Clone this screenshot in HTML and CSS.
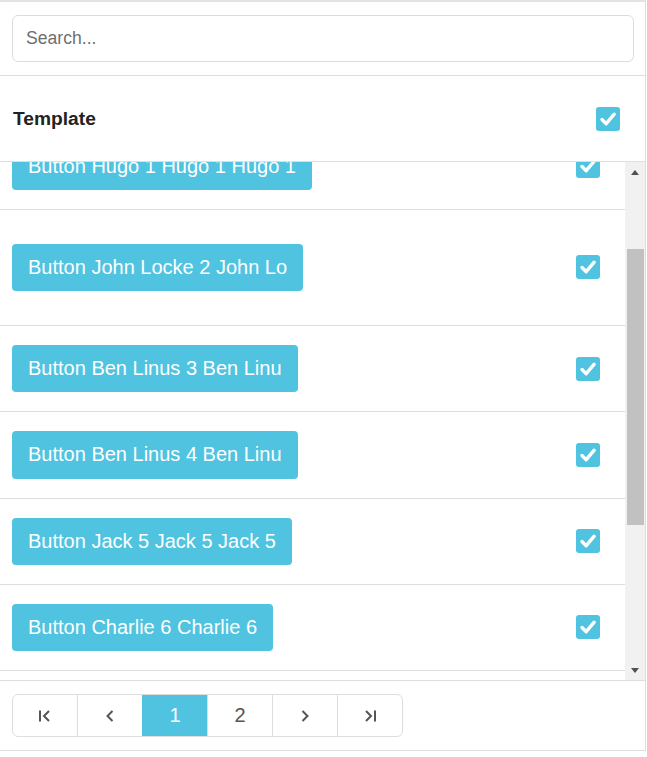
FILE: index.html
```html
<!DOCTYPE html>
<html lang="en">
<head>
<meta charset="utf-8">
<title>Template list</title>
<link rel="stylesheet" href="styles.css">
</head>
<body>
<div class="panel">
  <div class="search-bar">
    <input class="search-input" type="text" placeholder="Search...">
  </div>
  <div class="header-row">
    <span class="header-title">Template</span>
    <span class="check-cell">
      <svg class="checkbox" viewBox="0 0 24 24" width="24" height="24"><rect width="24" height="24" rx="3" fill="#4fc3df"/><path d="M6 12.5 L10.2 16.7 L18.2 7.2" fill="none" stroke="#fff" stroke-width="3.4" stroke-linecap="round" stroke-linejoin="round"/></svg>
    </span>
  </div>
  <div class="scroll-area">
    <div class="viewport">
      <div class="rows">
        <div class="row"><span class="btn">Button Hugo 1 Hugo 1 Hugo 1</span><span class="check-cell"><svg class="checkbox" viewBox="0 0 24 24" width="24" height="24"><rect width="24" height="24" rx="3" fill="#4fc3df"/><path d="M6 12.5 L10.2 16.7 L18.2 7.2" fill="none" stroke="#fff" stroke-width="3.4" stroke-linecap="round" stroke-linejoin="round"/></svg></span></div>
        <div class="row row-tall"><span class="btn">Button John Locke 2 John Lo</span><span class="check-cell"><svg class="checkbox" viewBox="0 0 24 24" width="24" height="24"><rect width="24" height="24" rx="3" fill="#4fc3df"/><path d="M6 12.5 L10.2 16.7 L18.2 7.2" fill="none" stroke="#fff" stroke-width="3.4" stroke-linecap="round" stroke-linejoin="round"/></svg></span></div>
        <div class="row"><span class="btn">Button Ben Linus 3 Ben Linu</span><span class="check-cell"><svg class="checkbox" viewBox="0 0 24 24" width="24" height="24"><rect width="24" height="24" rx="3" fill="#4fc3df"/><path d="M6 12.5 L10.2 16.7 L18.2 7.2" fill="none" stroke="#fff" stroke-width="3.4" stroke-linecap="round" stroke-linejoin="round"/></svg></span></div>
        <div class="row"><span class="btn">Button Ben Linus 4 Ben Linu</span><span class="check-cell"><svg class="checkbox" viewBox="0 0 24 24" width="24" height="24"><rect width="24" height="24" rx="3" fill="#4fc3df"/><path d="M6 12.5 L10.2 16.7 L18.2 7.2" fill="none" stroke="#fff" stroke-width="3.4" stroke-linecap="round" stroke-linejoin="round"/></svg></span></div>
        <div class="row"><span class="btn">Button Jack 5 Jack 5 Jack 5</span><span class="check-cell"><svg class="checkbox" viewBox="0 0 24 24" width="24" height="24"><rect width="24" height="24" rx="3" fill="#4fc3df"/><path d="M6 12.5 L10.2 16.7 L18.2 7.2" fill="none" stroke="#fff" stroke-width="3.4" stroke-linecap="round" stroke-linejoin="round"/></svg></span></div>
        <div class="row"><span class="btn">Button Charlie 6 Charlie 6</span><span class="check-cell"><svg class="checkbox" viewBox="0 0 24 24" width="24" height="24"><rect width="24" height="24" rx="3" fill="#4fc3df"/><path d="M6 12.5 L10.2 16.7 L18.2 7.2" fill="none" stroke="#fff" stroke-width="3.4" stroke-linecap="round" stroke-linejoin="round"/></svg></span></div>
        <div class="row"><span class="btn">Button Sawyer 7 Sawyer 7</span><span class="check-cell"><svg class="checkbox" viewBox="0 0 24 24" width="24" height="24"><rect width="24" height="24" rx="3" fill="#4fc3df"/><path d="M6 12.5 L10.2 16.7 L18.2 7.2" fill="none" stroke="#fff" stroke-width="3.4" stroke-linecap="round" stroke-linejoin="round"/></svg></span></div>
      </div>
    </div>
    <div class="scrollbar">
      <div class="sb-btn"><span class="tri-up"></span></div>
      <div class="sb-track"><div class="sb-thumb"></div></div>
      <div class="sb-btn"><span class="tri-down"></span></div>
    </div>
  </div>
  <div class="footer">
    <nav class="pager">
      <span class="pg"><svg width="16" height="16" viewBox="0 0 16 16"><path d="M3 2.5 V13.5" stroke="#555" stroke-width="2" fill="none"/><path d="M12 3 L7 8 L12 13" stroke="#555" stroke-width="2" fill="none"/></svg></span>
      <span class="pg"><svg width="16" height="16" viewBox="0 0 16 16"><path d="M10.5 3 L5.5 8 L10.5 13" stroke="#555" stroke-width="2" fill="none"/></svg></span>
      <span class="pg pg-active">1</span>
      <span class="pg">2</span>
      <span class="pg"><svg width="16" height="16" viewBox="0 0 16 16"><path d="M5.5 3 L10.5 8 L5.5 13" stroke="#555" stroke-width="2" fill="none"/></svg></span>
      <span class="pg"><svg width="16" height="16" viewBox="0 0 16 16"><path d="M4 3 L9 8 L4 13" stroke="#555" stroke-width="2" fill="none"/><path d="M13 2.5 V13.5" stroke="#555" stroke-width="2" fill="none"/></svg></span>
    </nav>
  </div>
</div>
</body>
</html>
```
FILE: styles.css
```css
html, body {
  margin: 0;
  padding: 0;
  background: #fff;
}
body {
  font-family: "Liberation Sans", Arial, sans-serif;
  color: #222;
}
.panel {
  width: 645px;
  border-top: 2px solid #e3e3e3;
  border-right: 1px solid #dedede;
  border-bottom: 1px solid #dedede;
}
.search-bar {
  padding: 13px 11px 13px 12px;
  border-bottom: 1px solid #dedede;
}
.search-input {
  display: block;
  box-sizing: border-box;
  width: 100%;
  height: 47px;
  border: 1px solid #dcdcdc;
  border-radius: 6px;
  padding: 0 13px;
  font-family: "Liberation Sans", Arial, sans-serif;
  font-size: 17.6px;
  color: #333;
  outline: none;
}
.search-input::placeholder {
  color: #6f6f6f;
}
.header-row {
  height: 85px;
  display: flex;
  align-items: center;
  justify-content: space-between;
  padding: 0 25px 0 13px;
  border-bottom: 1px solid #dedede;
}
.header-title {
  font-weight: bold;
  font-size: 19.2px;
  color: #222;
}
.check-cell {
  display: flex;
  align-items: center;
}
.checkbox {
  display: block;
}
.scroll-area {
  display: flex;
  height: 518px;
  border-bottom: 1px solid #dedede;
}
.viewport {
  flex: 1;
  overflow: hidden;
}
.rows {
  margin-top: -38.5px;
}
.row {
  display: flex;
  align-items: center;
  justify-content: space-between;
  padding: 19px 25px 19px 12px;
  border-bottom: 1px solid #dedede;
}
.row-tall {
  padding-top: 34px;
  padding-bottom: 34px;
}
.btn {
  display: inline-block;
  background: #4fc3df;
  color: #fff;
  font-size: 20px;
  line-height: 29.25px;
  padding: 9px 16px;
  border-radius: 4px;
  white-space: nowrap;
}
.scrollbar {
  width: 20px;
  background: #f1f1f1;
  display: flex;
  flex-direction: column;
}
.sb-btn {
  height: 20px;
  display: flex;
  align-items: center;
  justify-content: center;
}
.tri-up {
  width: 0;
  height: 0;
  border-left: 4.5px solid transparent;
  border-right: 4.5px solid transparent;
  border-bottom: 5px solid #505050;
}
.tri-down {
  width: 0;
  height: 0;
  border-left: 4.5px solid transparent;
  border-right: 4.5px solid transparent;
  border-top: 5px solid #505050;
}
.sb-track {
  flex: 1;
}
.sb-thumb {
  margin: 67px 1px 0 2px;
  height: 276px;
  background: #c1c1c1;
}
.footer {
  height: 69px;
  display: flex;
  align-items: center;
  padding-left: 12px;
}
.pager {
  display: flex;
  border: 1px solid #dedede;
  border-radius: 6px;
  overflow: hidden;
}
.pg {
  width: 64px;
  height: 41px;
  display: flex;
  align-items: center;
  justify-content: center;
  font-size: 20px;
  color: #555;
  border-left: 1px solid #dedede;
}
.pg:first-child {
  border-left: none;
}
.pg-active {
  background: #4fc3df;
  color: #fff;
  border-left-color: #4fc3df;
}
```
